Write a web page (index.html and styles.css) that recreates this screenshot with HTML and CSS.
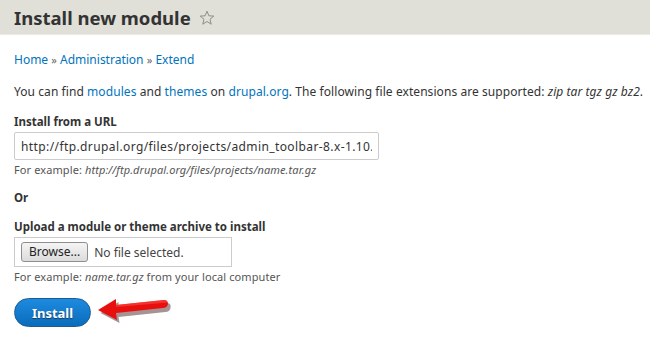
FILE: index.html
```html
<!DOCTYPE html>
<html lang="en">
  <head>
    <meta charset="UTF-8" />
    <title>Install new module</title>
    <link rel="stylesheet" href="styles.css">
  </head>
  <body>
    <header class="page-head">
      <h1 class="page-title">Install new module</h1>
      <svg class="star" width="16" height="16" viewBox="0 0 16 16">
        <path d="M8 1.2 L9.9 5.8 L14.8 6.1 L11 9.3 L12.2 14.2 L8 11.5 L3.8 14.2 L5 9.3 L1.2 6.1 L6.1 5.8 Z" fill="none" stroke="#8e8e8a" stroke-width="1" stroke-linejoin="round"/>
      </svg>
    </header>

    <main class="content">
      <nav class="breadcrumb">
        <a href="#">Home</a> <span class="sep">»</span> <a href="#">Administration</a> <span class="sep">»</span> <a href="#">Extend</a>
      </nav>

      <p class="intro">You can find <a href="#">modules</a> and <a href="#">themes</a> on <a href="#">drupal.org</a>. The following file extensions are supported: <em>zip tar tgz gz bz2</em>.</p>

      <form class="install-form">
        <!-- URL -->
        <div class="field">
          <label for="url">Install from a URL</label>
          <input type="text" id="url" class="url-input" value="http://ftp.drupal.org/files/projects/admin_toolbar-8.x-1.10.zip" />
          <div class="hint">For example: <em>http://ftp.drupal.org/files/projects/name.tar.gz</em></div>
        </div>

        <div class="or">Or</div>

        <!-- Upload -->
        <div class="field upload">
          <label>Upload a module or theme archive to install</label>
          <div class="file-box">
            <span class="browse">Browse...</span>
            <span class="no-file">No file selected.</span>
          </div>
          <div class="hint">For example: <em>name.tar.gz</em> from your local computer</div>
        </div>

        <div class="actions">
          <button type="button" class="install-btn">Install</button>
          <svg class="arrow" width="76" height="28" viewBox="0 0 76 28">
            <path d="M4 15 L22 4 L22 10 L70 5 Q75 5 74 10 Q73 14 69 14 L22 19 L23 25 Z" fill="#3a1010" opacity="0.45" transform="translate(1.5 2)"/>
            <path d="M3 14 L21 3 L21 9 L69 4 Q73 4 73 8 Q72 12 68 12 L21 17 L22 24 Z" fill="#e8100f"/>
            <path d="M21 9 L69 4 Q72 4 72.5 6.5 L21 11 Z" fill="#ff4a40" opacity="0.6"/>
          </svg>
        </div>
      </form>
    </main>
  </body>
</html>
```

FILE: styles.css
```css
body {
  margin: 0;
  font-family: "Noto Sans", "DejaVu Sans", sans-serif;
  font-size: 12px;
  color: #333;
  background: #fff;
}

a {
  color: #0074bd;
  text-decoration: none;
}

.page-head {
  display: flex;
  align-items: center;
  gap: 8px;
  height: 34px;
  padding: 0 14px;
  background: #e0dfd8;
  border-bottom: 1px solid #ebeae5;
}

.page-title {
  margin: 0;
  font-size: 18.5px;
  font-weight: bold;
  color: #333;
}

.star {
  margin-top: 1px;
}

.content {
  padding: 0 14px;
}

.breadcrumb {
  margin-top: 16px;
  line-height: 18px;
}

.breadcrumb .sep {
  color: #666;
  font-size: 11px;
}

.intro {
  margin: 14px 0 0;
  line-height: 18px;
  color: #333;
  white-space: nowrap;
  letter-spacing: 0.07px;
}

.field label {
  display: block;
  font-weight: bold;
  font-size: 11.5px;
  margin-top: 12px;
  line-height: 18px;
}

.upload label {
  margin-top: 11px;
}

.url-input {
  display: block;
  width: 365px;
  height: 28px;
  margin-top: 1px;
  padding: 0 6px;
  box-sizing: border-box;
  border: 1px solid #ccc;
  border-radius: 2px;
  font-family: inherit;
  font-size: 12px;
  letter-spacing: 0.4px;
  color: #333;
}

.hint {
  margin-top: 2px;
  font-size: 11px;
  color: #555;
  line-height: 16px;
  letter-spacing: 0.1px;
}

.or {
  margin-top: 11px;
  font-weight: bold;
  font-size: 11.5px;
  line-height: 18px;
}

.file-box {
  display: flex;
  align-items: center;
  gap: 6px;
  width: 218px;
  height: 30px;
  margin-top: 1px;
  padding: 0 6px;
  box-sizing: border-box;
  border: 1px solid #ccc;
}

.browse {
  padding: 1px 7px;
  border: 1px solid #8e8e8e;
  border-radius: 3px;
  background: linear-gradient(#f4f4f4, #dcdcdc);
  color: #222;
  line-height: 16px;
}

.no-file {
  color: #444;
}

.actions {
  display: flex;
  align-items: center;
  gap: 4px;
  margin-top: 13px;
}

.install-btn {
  width: 77px;
  height: 29px;
  border: 1px solid #1e5c90;
  border-radius: 15px;
  background: linear-gradient(#1d8be0, #0a6cbb);
  color: #fff;
  font-family: inherit;
  font-size: 13px;
  font-weight: bold;
  text-shadow: 0 1px 1px #1a3a5c;
  cursor: pointer;
}

.arrow {
  margin-top: -6px;
}
```
